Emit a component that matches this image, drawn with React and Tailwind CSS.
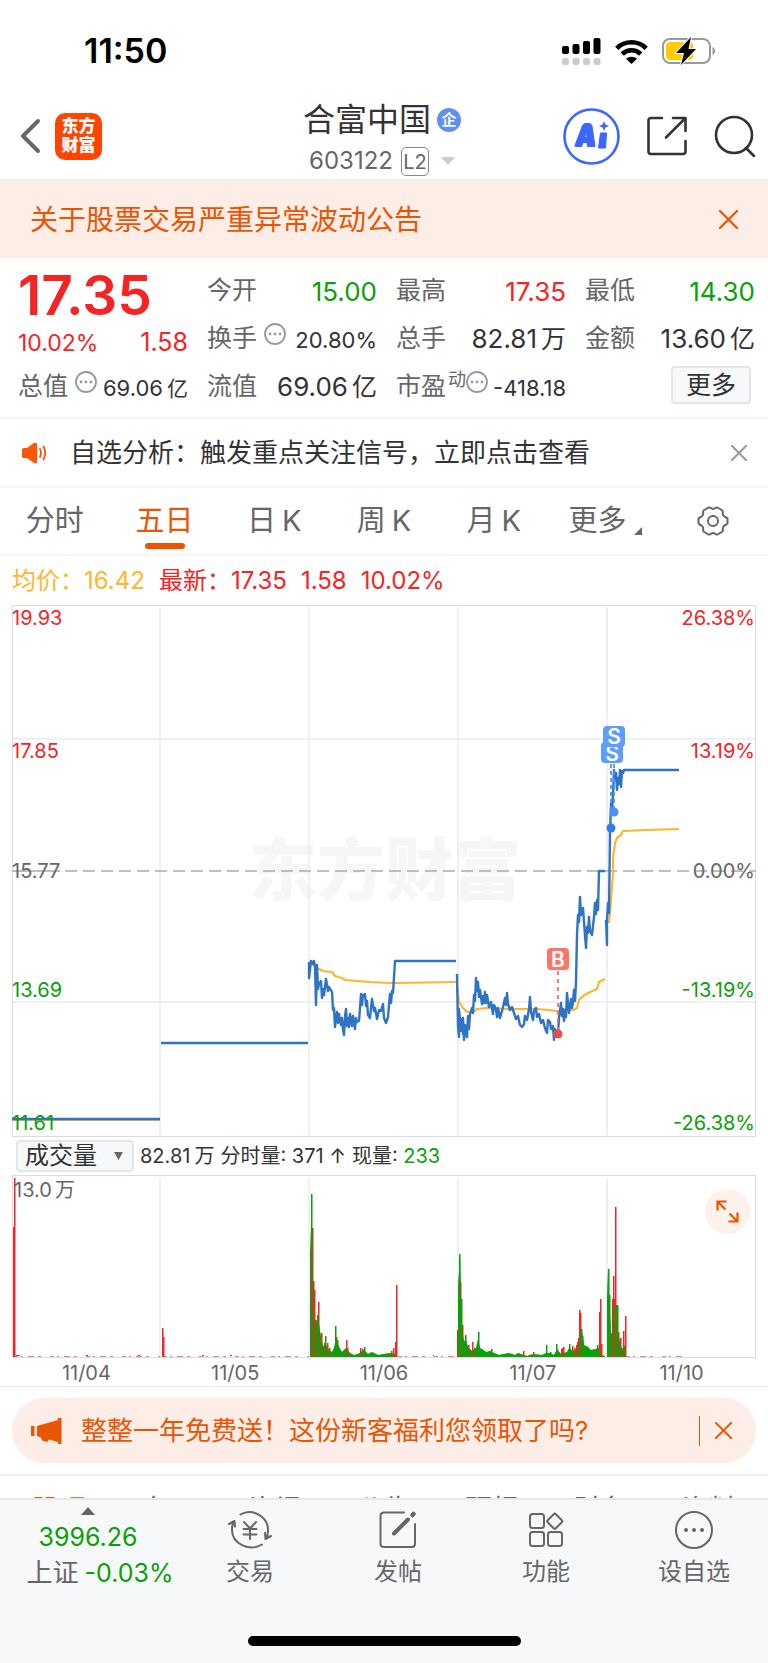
import { useState } from 'react';

const DAYS = ['11/04', '11/05', '11/06', '11/07', '11/10'];
const GRID_X = [148, 297, 446, 595];

// intraday price, one polyline per session
const PRICE_LINES = [
  '0,514 148,514',
  '149,438 296,438',
  '297,357 297,373 299,356 301,359 302,356 303,362 304,400 305,360 306,384 307,379 309,376 310,393 311,384 312,390 314,374 316,386 317,382 320,387 321,405 322,403 323,422 325,407 326,418 327,409 329,420 330,413 331,424 332,430 333,412 334,404 335,421 336,413 337,422 338,409 340,421 341,411 343,424 344,413 345,417 347,416 348,403 349,389 350,400 351,390 353,389 354,401 355,396 356,410 358,413 359,403 360,394 362,406 363,403 365,414 367,405 369,406 371,399 372,413 374,418 376,412 377,400 378,389 379,398 380,386 381,388 383,356 444,356',
  '445,369 446,422 447,432 447,404 449,426 450,414 451,429 451,413 452,435 453,420 455,432 456,411 457,424 458,409 460,403 461,408 462,390 463,396 464,373 465,386 466,377 467,392 468,385 470,399 471,391 472,398 473,387 474,398 475,390 477,402 479,397 481,409 482,400 484,404 485,412 486,403 488,413 490,406 491,402 493,393 494,400 495,388 496,399 498,405 500,402 502,408 504,414 506,411 508,420 510,422 512,419 513,411 515,415 517,404 518,392 519,407 521,415 522,406 524,403 525,412 527,409 529,418 531,415 533,423 535,428 536,415 538,417 539,424 541,421 542,435 543,424 546,429 547,413 549,398 550,411 551,404 552,416 553,405 554,412 555,388 557,408 559,394 560,403 561,397 562,385 563,396 564,377 565,330 566,310 567,317 568,292 569,310 571,303 572,317 574,343 575,322 576,328 577,312 578,326 580,330 582,312 583,298 584,309 585,295 586,305 587,266 593,266',
  '594,315 595,340 595,315 596,298 597,308 598,228 599,198 600,205 601,190 602,165 603,175 604,168 605,185 606,173 607,179 608,165 609,182 610,166 611,168 612,165 667,165',
];

const AVG_LINES = [
  '0,515 148,515',
  '299,357 305,363 311,366 320,367 323,371 330,373 333,375 345,376 358,377 378,378 385,378 444,377',
  '445,382 447,397 451,403 455,407 461,407 465,404 475,403 495,404 526,404 545,406 561,405 565,403 567,395 571,391 578,387 585,384 587,377 593,374',
  '597,318 598,308 601,268 601,252 603,238 605,233 609,230 611,226 635,225 667,224',
];

// volume bars as [x, height]
const UP_BARS = [
  [1, 130], [2, 179], [150, 29], [151, 20], [298, 108], [300, 129], [301, 76], [302, 67], [303, 37],
  [306, 55], [309, 24], [312, 14], [315, 14], [317, 9], [324, 20], [334, 17], [335, 9], [348, 9], [350, 8],
  [379, 6], [381, 9], [383, 15], [384, 72], [445, 27], [448, 75], [450, 32], [456, 12], [460, 15], [462, 9], [511, 6], [521, 5],
  [549, 8], [550, 9], [551, 10], [560, 11], [562, 9], [564, 12], [565, 15], [566, 19], [567, 47], [568, 44], [587, 45],
  [588, 58], [589, 13], [599, 24], [600, 58], [601, 81], [602, 58], [603, 150], [606, 25], [608, 19], [611, 26], [613, 41],
];

const DOWN_BARS = [
  [299, 163], [305, 42], [313, 21], [323, 31], [325, 17], [352, 10], [446, 69], [447, 103], [449, 58],
  [453, 22], [466, 25], [479, 8], [534, 12], [538, 5], [544, 13], [557, 13], [569, 28], [570, 21], [585, 12], [596, 88],
  [597, 62], [605, 52],
];

const DOWN_AREAS = [
  '298,181 298,100 299,130 301,52 302,40 303,30 305,38 306,40 307,33 309,20 311,11 314,12 317,7 320,5 322,9 324,18 327,10 330,5 334,9 338,4 342,2 346,3 352,7 356,3 360,5 366,2 378,4 383,3 384,0',
  '446,69 448,103 449,58 450,26 452,16 454,17 456,10 460,6 464,9 466,18 468,9 470,8 474,5 478,6 482,4 487,2 497,4 503,2 506,4 515,1 521,3 530,2 534,4 538,4 542,2 545,8 549,3 555,5 557,9 561,6 566,9 569,28 570,26 572,12 576,10 579,7 584,8 586,10 589,2 593,1',
  '595,57 596,88 598,43 599,22 600,24 601,53 603,52 605,52 606,26 608,14 610,8 613,12 614,0',
];

const areaPoints = (points) => {
  const pts = points.split(' ').map((p) => p.split(',').map(Number));
  const first = pts[0][0];
  const last = pts[pts.length - 1][0];
  return `${first},182 ${pts.map(([x, h]) => `${x},${182 - h}`).join(' ')} ${last},182`;
};

const Close = ({ className }) => (
  <svg className={className} viewBox="0 0 20 20" fill="none">
    <path d="M1 1L19 19M19 1L1 19" stroke="currentColor" strokeWidth="2.400" strokeLinecap="round" />
  </svg>
);

const MoreDot = () => (
  <svg className="w-[22px] h-[22px] shrink-0 mb-2.5 text-[#999]" viewBox="0 0 22 22" fill="none">
    <circle cx="11" cy="11" r="10" stroke="currentColor" strokeWidth="1.800" />
    <circle cx="6" cy="11" r="1.400" fill="currentColor" />
    <circle cx="11" cy="11" r="1.400" fill="currentColor" />
    <circle cx="16" cy="11" r="1.400" fill="currentColor" />
  </svg>
);

const StatusBar = () => (
  <div className="h-24 pt-1.5 pl-[84px] pr-[52px] flex items-center justify-between text-black">
    <span className="text-[34px] leading-10 font-semibold">11:50</span>
    <div className="flex items-center gap-[14px]">
      <svg className="w-[39px] h-[28px]" viewBox="0 0 39 28">
        <rect x="0" y="9" width="7" height="8" rx="2" />
        <rect x="10.500" y="7" width="7" height="10" rx="2" />
        <rect x="21" y="4" width="7" height="13" rx="2" />
        <rect x="31.500" y="1" width="7" height="16" rx="2" />
        <g fill="#ccc">
          <rect x="0" y="21" width="7" height="7" rx="2.500" />
          <rect x="10.500" y="21" width="7" height="7" rx="2.500" />
          <rect x="21" y="21" width="7" height="7" rx="2.500" />
          <rect x="31.500" y="21" width="7" height="7" rx="2.500" />
        </g>
      </svg>
      <svg className="w-[33px] h-[25px]" viewBox="0 0 33 25" fill="none" stroke="#000" strokeWidth="4.600">
        <path d="M1.800 9.300C9.800 1.300 23.200 1.300 31.200 9.300" />
        <path d="M7.300 15C12.500 10 20.500 10 25.700 15" />
        <path d="M16.500 25L11 19.700C14 17 19 17 22 19.700Z" fill="#000" stroke="none" />
      </svg>
      <svg className="w-[54px] h-[28px]" viewBox="0 0 54 28" fill="none">
        <rect x="1" y="2" width="47" height="24" rx="7" stroke="#999" strokeWidth="2" />
        <path d="M50.500 10C54 11.500 54 16.500 50.500 18Z" fill="#999" />
        <rect x="4" y="5" width="27" height="18" rx="4" fill="#fc0" />
        <path d="M29 0L14 16H22L19 28L34 12H26.500Z" fill="#000" stroke="#fff" strokeWidth="2" paintOrder="stroke" />
      </svg>
    </div>
  </div>
);

const Header = () => (
  <header className="h-[85px] border-b-2 border-[#eceef0] pl-5 pr-3 grid grid-cols-[1fr_auto_1fr] grid-rows-[80px] items-center">
    <div className="flex items-center gap-[14px]">
      <button aria-label="返回">
        <svg className="w-[21px] h-[36px]" viewBox="0 0 21 36" fill="none">
          <path d="M18 3L3 18L18 33" stroke="#666" strokeWidth="4" strokeLinecap="round" strokeLinejoin="round" />
        </svg>
      </button>
      <span className="w-[47px] h-[47px] rounded-[10px] bg-[#ff4400] text-white font-black text-[17px] leading-[19px] flex flex-col items-center justify-center">
        <span>东方</span>
        <span>财富</span>
      </span>
    </div>
    <div className="self-start pt-1 pr-3 flex flex-col items-center">
      <h1 className="h-10 flex items-center gap-1.5 text-[32px] leading-10 text-[#333]">
        合富中国
        <span className="w-6 h-6 rounded-full bg-[#5f8ff0] text-white text-[15px] leading-6 font-bold text-center">企</span>
      </h1>
      <button className="h-[42px] flex items-center text-[24px] text-[#666]">
        603122
        <span className="ml-2 w-7 h-[29px] rounded-[5px] border border-[#888] text-[20px] leading-[28px] text-center">L2</span>
        <svg className="ml-3 w-[14px] h-2" viewBox="0 0 14 8">
          <path d="M0 0H14L7 8Z" fill="#ccc" />
        </svg>
      </button>
    </div>
    <div className="flex items-center justify-end gap-[27px] text-[#333]">
      <button aria-label="AI">
        <svg className="w-[57px] h-[57px]" viewBox="0 0 57 57" fill="none">
          <circle cx="28.500" cy="28.500" r="27" stroke="#3b66ff" strokeWidth="2.600" />
          <path fillRule="evenodd" d="M12 37.500L19.500 17.500Q20.500 15.500 23 15.500H26Q28.500 15.500 29 18L32 38.500H24.500L24 34.500H20L18.500 38.500H13Q11.500 38.500 12 37.500ZM21.500 29.500H24L23.500 23.500Z" fill="#3b66ff" stroke="#3b66ff" strokeLinejoin="round" />
          <path d="M37.500 25H43.500L42.500 40H35.500Z" fill="#3b66ff" stroke="#3b66ff" strokeLinejoin="round" />
          <path d="M41 13L42.500 16.500L46 18L42.500 19.500L41 23L39.500 19.500L36 18L39.500 16.500Z" fill="#3b66ff" />
        </svg>
      </button>
      <button aria-label="分享">
        <svg className="w-10 h-10" viewBox="0 0 40 40" fill="none" stroke="currentColor" strokeWidth="2.600" strokeLinecap="round" strokeLinejoin="round">
          <path d="M15 2H4Q1.500 2 1.500 4.500V35.500Q1.500 38 4 38H36Q38.500 38 38.500 35.500V25" />
          <path d="M26 2H38.500V15M38 2.500L19 21.500" />
        </svg>
      </button>
      <button aria-label="搜索">
        <svg className="w-[42px] h-[42px]" viewBox="0 0 42 42" fill="none" stroke="currentColor" strokeWidth="2.600" strokeLinecap="round">
          <circle cx="20" cy="20" r="18" />
          <path d="M32 33L40 41" />
        </svg>
      </button>
    </div>
  </header>
);

const Notice = ({ onClose }) => (
  <div className="h-[77px] pl-[30px] pr-[30px] bg-[#fcede6] text-[#ea5504] flex items-center justify-between">
    <a href="#notice" className="text-[28px] leading-10">关于股票交易严重异常波动公告</a>
    <button onClick={onClose} aria-label="关闭公告">
      <Close className="w-[19px] h-[19px]" />
    </button>
  </div>
);

const Cell = ({ label, tag, more, value, unit, color = 'text-[#333]', small }) => (
  <div className="h-12 flex items-center whitespace-nowrap">
    <span className="text-[25px] text-[#666]">{label}</span>
    {tag && <span className="text-[18px] text-[#666] mb-4 ml-0.5">{tag}</span>}
    {more && <span className={tag ? 'flex' : 'flex ml-[7px]'}><MoreDot /></span>}
    <span className={`ml-auto ${small ? 'text-[22px] pt-0.5' : 'text-[26px]'} ${color}`}>
      {value}
      {unit && <span className={small ? 'ml-1 text-[21px]' : 'ml-1 text-[25px]'}>{unit}</span>}
    </span>
  </div>
);

const Quote = () => (
  <section className="h-[161px] pt-[9px] pl-[18px] pr-[13px] grid grid-cols-4 gap-x-[19px] items-start border-b-2 border-[#f5f6f7]">
    <div>
      <div className="h-14 text-[55px] leading-14 font-semibold text-[#f52424]">17.35</div>
      <div className="h-10 flex items-center justify-between text-[#f52424]">
        <span className="text-[23px]">10.02%</span>
        <span className="text-[25px]">1.58</span>
      </div>
      <Cell label="总值" more small value="69.06" unit="亿" />
    </div>
    <div>
      <Cell label="今开" value="15.00" color="text-[#0aa00a]" />
      <Cell label="换手" more small value="20.80%" />
      <Cell label="流值" value="69.06" unit="亿" />
    </div>
    <div>
      <Cell label="最高" value="17.35" color="text-[#f52424]" />
      <Cell label="总手" value="82.81" unit="万" />
      <Cell label="市盈" tag="动" more small value="-418.18" />
    </div>
    <div>
      <Cell label="最低" value="14.30" color="text-[#0aa00a]" />
      <Cell label="金额" value="13.60" unit="亿" />
      <div className="h-11 flex items-center justify-end pr-1">
        <button className="w-20 h-[38px] rounded border-2 border-[#e2e5e9] bg-[#f7f8fa] text-[25px] leading-8 text-[#333]">更多</button>
      </div>
    </div>
  </section>
);

const Signal = ({ onClose }) => (
  <div className="h-[69px] pl-[22px] pr-[21px] flex items-center border-b-2 border-[#f5f6f7]">
    <svg className="w-[26px] h-[22px]" viewBox="0 0 26 22" fill="none">
      <path d="M0 7.500Q0 6 2 6H5L12 1Q15 0 15 2V20Q15 22 12 21L5 16H2Q0 16 0 14.500Z" fill="#ff5500" />
      <path d="M18 7Q20 11 18 15M21.500 4.500Q25 11 21.500 17.500" stroke="#ff5500" strokeWidth="1.800" strokeLinecap="round" />
    </svg>
    <a href="#signal" className="ml-[22px] text-[26px] leading-10 text-[#333]">自选分析：触发重点关注信号，立即点击查看</a>
    <button onClick={onClose} className="ml-auto text-[#999]" aria-label="关闭提示">
      <Close className="w-4 h-4" />
    </button>
  </div>
);

const PeriodTabs = ({ active, onChange }) => (
  <nav className="h-[68px] grid grid-cols-7 border-b-2 border-[#f5f6f7] text-[29px] leading-10 text-[#666]">
    {['分时', '五日', '日K', '周K', '月K'].map((name) => (
      <button
        key={name}
        onClick={() => onChange(name)}
        className={`pt-[13px] flex flex-col items-center ${active === name ? 'text-[#ea5504]' : ''}`}
      >
        <span>
          {name.slice(0, 1)}
          <span className={name.endsWith('K') ? 'ml-1.5' : ''}>{name.slice(1)}</span>
        </span>
        {active === name && <span className="mt-0.5 w-10 h-1.5 rounded-full bg-[#ea5504]" />}
      </button>
    ))}
    <button className="pt-[13px] pl-1 flex justify-center gap-2">
      更多
      <svg className="w-2 h-2 mt-[26px]" viewBox="0 0 8 8">
        <path d="M8 0V8H0Z" fill="#666" />
      </svg>
    </button>
    <button className="flex items-center justify-center" aria-label="设置">
      <svg className="w-8 h-[30px]" viewBox="0 0 32 30" fill="none" stroke="#666" strokeWidth="2">
        <path d="M11.500 1.500C13.500 1 13.500 3 16 3S18.500 1 20.500 1.500L25.500 4.500C26.500 6 25 7.500 26.500 9.500S29.500 11 30.500 12.500V17.500C29.500 19 28 18.500 26.500 20.500S26.500 24 25.500 25.500L20.500 28.500C18.500 29 18.500 27 16 27S13.500 29 11.500 28.500L6.500 25.500C5.500 24 7 22.500 5.500 20.500S2.500 19 1.500 17.500V12.500C2.500 11 4 11.500 5.500 9.500S5.500 6 6.500 4.500Z" strokeLinejoin="round" />
        <circle cx="16" cy="15" r="5" />
      </svg>
    </button>
  </nav>
);

const PriceChart = () => (
  <svg className="block w-full" viewBox="0 0 744 532" fontSize="20" fill="none">
    <text x="373" y="290" textAnchor="middle" fontSize="68" fontWeight="900" fill="#f6f6f7">东方财富</text>
    <g stroke="#e9ebf1" strokeWidth="1.500">
      {GRID_X.map((x) => <path key={x} d={`M${x} 2V530`} />)}
      <path d="M0 134H744M0 397H744" />
    </g>
    <rect x="0.500" y="0.500" width="743" height="531" stroke="#d9dce2" />
    <path d="M53 266H744" stroke="#aaa" strokeWidth="1.600" strokeDasharray="12 6" />
    <path d="M0 266H48" stroke="#aaa" strokeWidth="1.600" />
    <g stroke="#ffb52e" strokeWidth="2.200" strokeLinejoin="round">
      {AVG_LINES.map((points) => <polyline key={points} points={points} />)}
    </g>
    <g stroke="#2f74c4" strokeWidth="2.400" strokeLinejoin="round">
      {PRICE_LINES.map((points) => <polyline key={points} points={points} />)}
    </g>
    <g fill="#f52424">
      <text x="0" y="20">19.93</text>
      <text x="0" y="153">17.85</text>
      <text x="743" y="20" textAnchor="end">26.38%</text>
      <text x="743" y="153" textAnchor="end">13.19%</text>
    </g>
    <g fill="#666">
      <text x="0" y="273">15.77</text>
      <text x="743" y="273" textAnchor="end">0.00%</text>
    </g>
    <g fill="#0aa00a">
      <text x="0" y="392">13.69</text>
      <text x="0" y="525">11.61</text>
      <text x="743" y="392" textAnchor="end">-13.19%</text>
      <text x="743" y="525" textAnchor="end">-26.38%</text>
    </g>

    {/* buy / sell marks */}
    <path d="M546 366V425" stroke="#ff6b5e" strokeWidth="1.800" strokeDasharray="4 4" />
    <circle cx="546" cy="429" r="4.500" fill="#e5504f" />
    <rect x="535" y="343" width="22" height="22" rx="4" fill="#ff7668" />
    <path d="M599 159V220M602 159V204" stroke="#4b92fa" strokeWidth="1.800" strokeDasharray="4 3" />
    <circle cx="602" cy="207" r="4.500" fill="#4b92fa" />
    <circle cx="599" cy="223" r="4.500" fill="#2f7cf0" />
    <rect x="589" y="137" width="22" height="21" rx="4" fill="#5c9dff" />
    <g fill="#fff" fontSize="21" fontWeight="600" textAnchor="middle">
      <text x="546" y="362">B</text>
      <text x="600" y="156">S</text>
    </g>
    <rect x="591" y="121" width="22" height="21" rx="4" fill="#5c9dff" />
    <text x="602" y="139" fill="#fff" fontSize="21" fontWeight="600" textAnchor="middle">S</text>
  </svg>
);

const VolumeChart = () => (
  <div className="relative">
    <svg className="block w-full" viewBox="0 0 744 183" fontSize="20" fill="none">
      <g stroke="#e9ebf1" strokeWidth="1.500">
        {GRID_X.map((x) => <path key={x} d={`M${x} 3V182`} />)}
      </g>
      <rect x="0.500" y="0.500" width="743" height="182" stroke="#d9dce2" />
      <text x="2" y="22" fill="#666">13.0<tspan dx="3">万</tspan></text>
      <path d="M2 181.500H148M151 181.500H297M386 181.500H445M614 181.500H670" stroke="#f52424" opacity="0.600" strokeDasharray="4 3 2 5 6 4 3 9" />
      <path d="M4 180.500H8M74 180.500H76M126 180.500H128M190 180.500H192M218 180.500H220M421 180.500H422" stroke="#f52424" />
      {DOWN_AREAS.map((points) => <polygon key={points} points={areaPoints(points)} fill="#0aa00a" />)}
      <g fill="#f52424">
        {UP_BARS.map(([x, h]) => <rect key={x} x={x} y={182 - h} width="1.500" height={h} />)}
      </g>
      <g fill="#0aa00a">
        {DOWN_BARS.map(([x, h]) => <rect key={x} x={x} y={182 - h} width="1.500" height={h} />)}
        {DOWN_AREAS.map((points) => <polygon key={points} points={areaPoints(points)} opacity="0.550" />)}
      </g>
    </svg>
    <button className="absolute top-[14px] right-[6px] w-[45px] h-[45px] rounded-full bg-[#fdf1eb] flex items-center justify-center" aria-label="全屏">
      <svg className="w-[23px] h-[23px]" viewBox="0 0 23 23" fill="none" stroke="#ea5504" strokeWidth="2.200">
        <path d="M1.500 10.500V1.500H10.500M1.500 1.500L9.500 9.500M21.500 12.500V21.500H12.500M21.500 21.500L13.500 13.500" />
      </svg>
    </button>
  </div>
);

const Promo = ({ onClose }) => (
  <div className="px-3 pt-[11px] pb-[11px] border-b-2 border-[#eceef0]">
    <div className="h-[65px] rounded-full bg-[#fcede6] text-[#ea5504] pl-[19px] pr-6 flex items-center">
      <svg className="w-[31px] h-[26px]" viewBox="0 0 31 26" fill="currentColor">
        <path d="M0 8H3.500V18H0ZM6 8L27 2V0H30.500V26H27V24L18 21.500L16 24L11 22.500L10 19.500L6 18Z" />
      </svg>
      <a href="#promo" className="ml-[19px] text-[26px] leading-10">整整一年免费送！这份新客福利您领取了吗?</a>
      <span className="ml-auto w-px h-[30px] bg-[#ea5504]" />
      <button onClick={onClose} className="ml-[15px]" aria-label="关闭活动">
        <Close className="w-[17px] h-[17px]" />
      </button>
    </div>
  </div>
);

const NavItem = ({ label, children }) => (
  <button className="flex-1 flex flex-col items-center pt-2 text-[24px] leading-8 text-[#666]">
    <svg className="w-11 h-11 mb-1" viewBox="0 0 44 44" fill="none" stroke="currentColor" strokeWidth="2" strokeLinecap="round" strokeLinejoin="round">
      {children}
    </svg>
    {label}
  </button>
);

const BottomNav = () => (
  <footer className="h-[165px] bg-[#f7f8fa] border-t-2 border-[#e6e8eb] flex flex-col justify-between">
    <nav className="flex items-start">
      <button className="w-[176px] pt-[7px] flex flex-col items-center text-[25px] text-[#0aa00a]">
        <svg className="w-[14px] h-2" viewBox="0 0 14 8">
          <path d="M7 0L14 8H0Z" fill="#666" />
        </svg>
        <span className="mt-1 leading-9">3996.26</span>
        <span className="pl-6 leading-9 whitespace-nowrap"><span className="mr-1.5 text-[26px] text-[#666]">上证</span>-0.03%</span>
      </button>
      <NavItem label="交易">
        <path d="M12.500 6.500C24 0 40 8 40 22C40 25 39.500 28 38.500 30L38 31M43 28L37.500 31L37 25M34 36.500C22 44 4 36 4 22C4 19 4.500 16 5.500 14.500M1 16L6.500 13L7 18.500" />
        <path d="M16 14L22 20.500L28 14M22 20.500V31M15.500 21H28.500M15.500 26.500H28.500" />
      </NavItem>
      <NavItem label="发帖">
        <path d="M28 4.500H8Q4.500 4.500 4.500 8V35.500Q4.500 39 8 39H35.500Q39 39 39 35.500V16" />
        <path d="M18 25.500L32 11.500" strokeWidth="4" />
        <path d="M36.500 7L37.500 6" strokeWidth="4.500" />
      </NavItem>
      <NavItem label="功能">
        <rect x="6" y="6" width="14" height="14" rx="2.500" />
        <rect x="6" y="24" width="14" height="14" rx="2.500" />
        <rect x="24" y="24" width="14" height="14" rx="2.500" />
        <rect x="25" y="7.500" width="11.500" height="11.500" rx="1.500" transform="rotate(45 30.750 13.250)" />
      </NavItem>
      <NavItem label="设自选">
        <circle cx="22" cy="22" r="18" />
        <g fill="currentColor" stroke="none">
          <circle cx="14" cy="22" r="2" />
          <circle cx="22" cy="22" r="2" />
          <circle cx="30" cy="22" r="2" />
        </g>
      </NavItem>
    </nav>
    <div className="w-[273px] h-2.5 mb-[17px] mx-auto rounded-full bg-black" />
  </footer>
);

const App = () => {
  const [period, setPeriod] = useState('五日');
  const [closed, setClosed] = useState({});
  const close = (key) => setClosed((prev) => ({ ...prev, [key]: true }));

  return (
    <div className="bg-white font-['Inter','Noto_Sans_CJK_SC',sans-serif]">
      <StatusBar />
      <Header />
      {!closed.notice && <Notice onClose={() => close('notice')} />}
      <Quote />
      {!closed.signal && <Signal onClose={() => close('signal')} />}
      <PeriodTabs active={period} onChange={setPeriod} />

      <section className="px-3">
        <div className="h-[49px] pt-px flex items-center gap-[14px] text-[24px] text-[#f52424] whitespace-nowrap">
          <span className="text-[#ffb52e]">均价：16.42</span>
          <span>最新：17.35</span>
          <span>1.58</span>
          <span>10.02%</span>
        </div>
        <PriceChart />
        <div className="h-[38px] pl-1 flex items-center gap-1.5 text-[20px] text-[#333] whitespace-nowrap">
          <div className="relative">
            <select aria-label="指标" className="block appearance-none w-[118px] h-8 pl-[7px] rounded border-2 border-[#e2e5e9] bg-[#f7f8fa] text-[24px] leading-7">
              <option>成交量</option>
            </select>
            <svg className="absolute right-[11px] top-3 w-[9px] h-2 pointer-events-none" viewBox="0 0 9 8">
              <path d="M0 0H9L4.500 8Z" fill="#666" />
            </svg>
          </div>
          <span>82.81<span className="ml-1">万</span></span>
          <span>分时量: 371 ↑</span>
          <span>现量: <span className="text-[#0aa00a]">233</span></span>
        </div>
        <VolumeChart />
        <div className="h-7 grid grid-cols-5 text-center text-[20px] leading-[30px] text-[#666]">
          {DAYS.map((day) => <span key={day}>{day}</span>)}
        </div>
      </section>

      <div className="border-t border-[#e6e8eb]">
        {!closed.promo && <Promo onClose={() => close('promo')} />}
      </div>

      <nav className="h-[22px] pt-4 px-8 flex justify-between overflow-hidden text-[27px] leading-9 text-[#666]">
        {['股吧', '盘口', '资讯', '公告', '研报', '财务', '资料'].map((name, i) => (
          <a key={name} href={`#tab-${i}`} className={i === 0 ? 'text-[#ea5504]' : ''}>{name}</a>
        ))}
      </nav>
      <BottomNav />
    </div>
  );
};

export default App;
